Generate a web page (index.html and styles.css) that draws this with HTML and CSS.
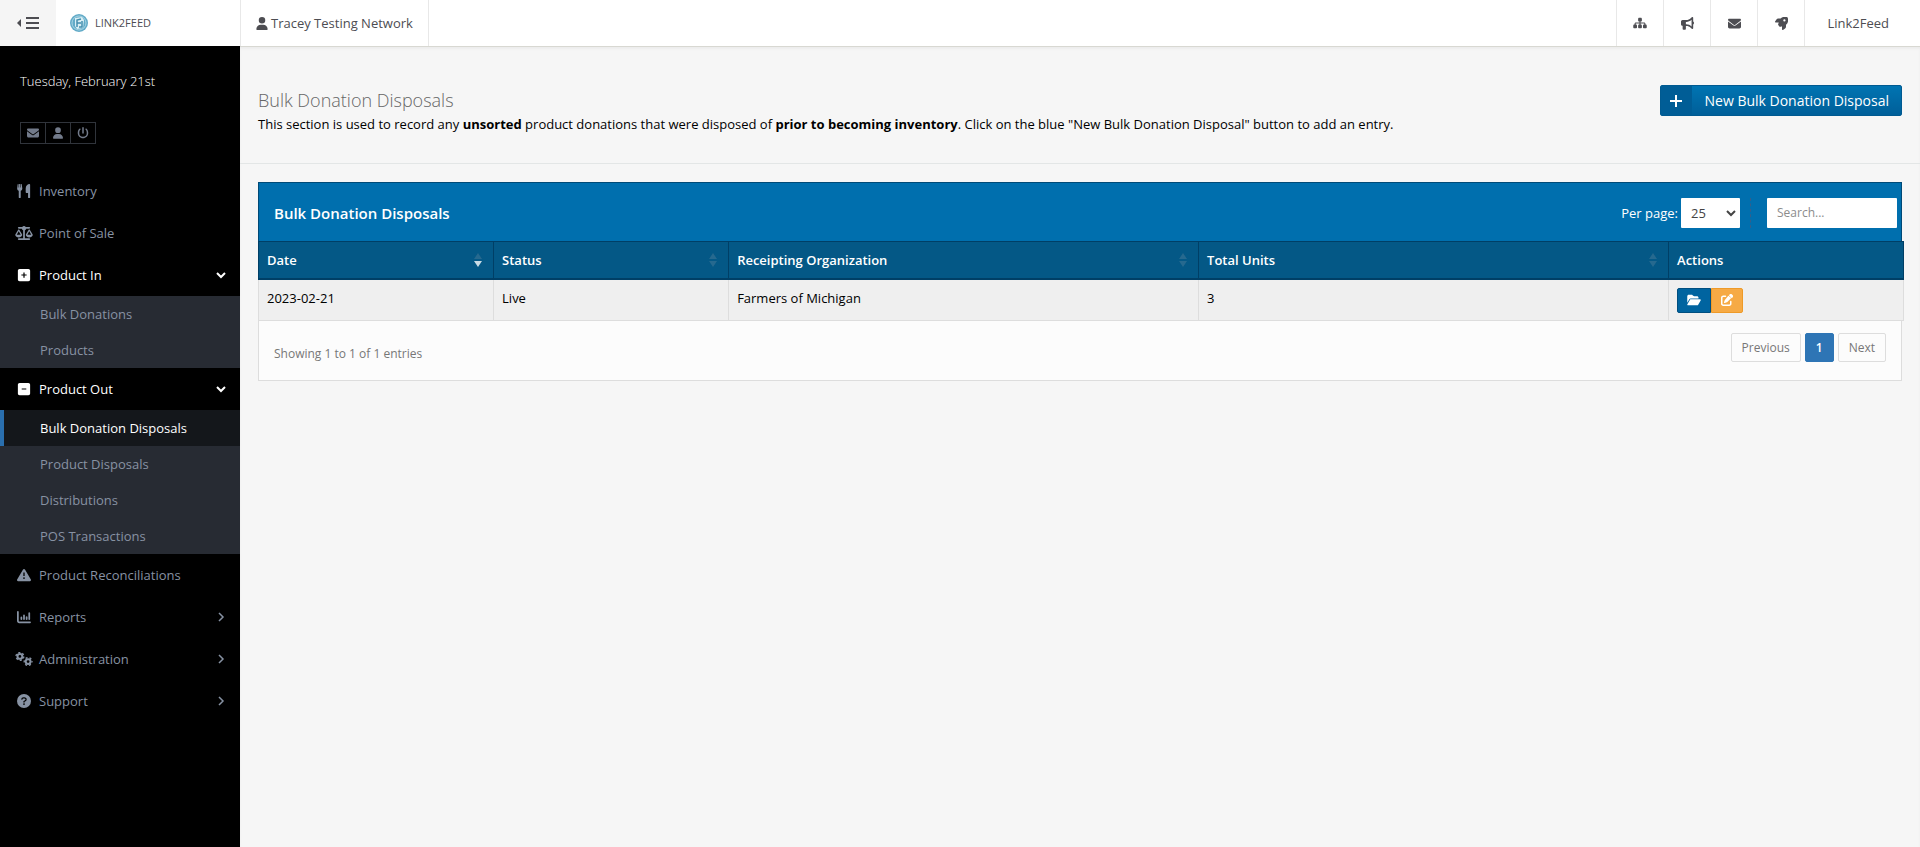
FILE: index.html
```html
<!DOCTYPE html>
<html lang="en">
<head>
<meta charset="utf-8">
<meta name="viewport" content="width=device-width, initial-scale=1">
<title>Bulk Donation Disposals</title>
<link rel="stylesheet" href="styles.css">
</head>
<body>
<svg class="sprite" aria-hidden="true">
  <symbol id="user" viewBox="0 0 448 512"><path d="M224 256A128 128 0 1 0 224 0a128 128 0 1 0 0 256zm-46 48C80 304 0 384 0 482c0 17 13 30 30 30h388c17 0 30-13 30-30 0-98-80-178-178-178z"/></symbol>
  <symbol id="envelope" viewBox="0 0 512 512"><path d="M48 64C21.500 64 0 85.500 0 112c0 15 7 29 19 38l218 164c11 9 27 9 38 0l218-164c12-9 19-23 19-38 0-26.500-21.500-48-48-48zM0 176v208c0 35 29 64 64 64h384c35 0 64-29 64-64V176L294 339c-23 17-53 17-76 0z"/></symbol>
  <symbol id="power" viewBox="0 0 512 512"><path d="M288 32c0-18-14-32-32-32s-32 14-32 32v224c0 18 14 32 32 32s32-14 32-32zM143 120c14-11 16-31 5-45s-31-16-45-5C55 109 32 180 32 256c0 124 100 224 224 224s224-100 224-224c0-76-29-147-71-186-14-11-34-9-45 5s-9 34 5 45c29 24 47 78 47 136a160 160 0 0 1-320 0c0-58 18-112 47-136z"/></symbol>
  <symbol id="utensils" viewBox="0 0 512 512"><path d="M40 0c12 0 18 8 18 18v112h18V18c0-24 36-24 36 0v112h18V18c0-24 44-24 44 0l20 142c0 44-26 72-58 88v232c0 42-72 42-72 0V248C32 232 6 204 6 160L22 18C22 8 30 0 40 0zM456 0c14 0 24 10 24 24v456c0 42-76 42-76 0V328h-48c-22 0-38-18-38-40V160C318 62 390 0 456 0z"/></symbol>
  <symbol id="scale" viewBox="0 0 640 512"><path d="M384 32h128c18 0 32 14 32 32s-14 32-32 32H399c-6 25-24 46-47 57v295h160c18 0 32 14 32 32s-14 32-32 32H128c-18 0-32-14-32-32s14-32 32-32h160V153c-23-11-41-32-47-57H128c-18 0-32-14-32-32s14-32 32-32h128c15-19 38-32 64-32s49 13 64 32zm56 288h144l-72-124zm72 96c-63 0-115-34-126-79-3-11 1-22 7-32l94-162c6-9 15-15 25-15s20 6 25 15l95 162c6 10 9 21 7 32-11 45-64 79-127 79zM127 196 55 320h144zM1 337c-3-11 1-22 7-32l94-162c5-9 14-15 25-15s20 6 25 15l95 162c5 10 9 21 6 32-11 45-63 79-126 79S12 382 1 337z"/></symbol>
  <symbol id="plus-box" viewBox="0 0 448 512"><path fill-rule="evenodd" d="M64 32h320c35 0 64 29 64 64v320c0 35-29 64-64 64H64c-35 0-64-29-64-64V96c0-35 29-64 64-64zm138 128v74h-74v44h74v74h44v-74h74v-44h-74v-74z"/></symbol>
  <symbol id="minus-box" viewBox="0 0 448 512"><path fill-rule="evenodd" d="M64 32h320c35 0 64 29 64 64v320c0 35-29 64-64 64H64c-35 0-64-29-64-64V96c0-35 29-64 64-64zm76 202v44h168v-44z"/></symbol>
  <symbol id="warning" viewBox="0 0 512 512"><path fill-rule="evenodd" d="M256 32c14 0 27 7 35 20l216 368c17 28-5 60-35 60H40c-31 0-52-33-35-60L221 52c8-13 21-20 35-20zm-24 128v136h48V160zm24 176a32 32 0 1 0 0 64 32 32 0 1 0 0-64z"/></symbol>
  <symbol id="chart" viewBox="0 0 512 512"><path d="M32 32c18 0 32 14 32 32v336c0 9 7 16 16 16h400c18 0 32 14 32 32s-14 32-32 32H80c-44 0-80-36-80-80V64c0-18 14-32 32-32zm128 208c18 0 32 14 32 32v64c0 40-64 40-64 0v-64c0-18 14-32 32-32zm64-48c0-42 64-42 64 0v144c0 40-64 40-64 0zm128 32c18 0 32 14 32 32v80c0 40-64 40-64 0v-80c0-18 14-32 32-32zm64-112c0-42 64-42 64 0v224c0 40-64 40-64 0z"/></symbol>
  <symbol id="gears" viewBox="0 0 640 512"><g fill="none" stroke="currentColor"><circle cx="170" cy="160" r="88" stroke-width="74"/><circle cx="170" cy="160" r="142" stroke-width="50" stroke-dasharray="74 75"/><circle cx="470" cy="350" r="88" stroke-width="74"/><circle cx="470" cy="350" r="142" stroke-width="50" stroke-dasharray="74 75" stroke-dashoffset="40"/></g></symbol>
  <symbol id="question" viewBox="0 0 512 512"><circle cx="256" cy="256" r="256"/><path d="M178 190c4-34 26-48 58-48h32c70 0 88 76 34 104l-46 28v20" fill="none" stroke="#000" stroke-width="46" stroke-linecap="round"/><circle cx="256" cy="366" r="32" fill="#000"/></symbol>
  <symbol id="down" viewBox="0 0 10 10"><path d="M1 3l4 4 4-4" fill="none" stroke="currentColor" stroke-width="2"/></symbol>
  <symbol id="right" viewBox="0 0 10 10"><path d="M3 1l4 4-4 4" fill="none" stroke="currentColor" stroke-width="1.500"/></symbol>
  <symbol id="sitemap" viewBox="0 0 576 512"><path d="M208 80c0-26 22-48 48-48h64c26 0 48 22 48 48v64c0 26-22 48-48 48h-8v40h152c30 0 56 25 56 56v32h8c26 0 48 22 48 48v64c0 26-22 48-48 48h-64c-26 0-48-22-48-48v-64c0-26 22-48 48-48h8v-32c0-4-4-8-8-8H312v40h8c26 0 48 22 48 48v64c0 26-22 48-48 48h-64c-26 0-48-22-48-48v-64c0-26 22-48 48-48h8v-40H112c-4 0-8 4-8 8v32h8c26 0 48 22 48 48v64c0 26-22 48-48 48H48c-26 0-48-22-48-48v-64c0-26 22-48 48-48h8v-32c0-31 25-56 56-56h152v-40h-8c-26 0-48-22-48-48z"/></symbol>
  <symbol id="bullhorn" viewBox="0 0 512 512"><path fill-rule="evenodd" d="M480 32c0-29-35-43-55-23l-43 44c-45 45-106 70-170 70H64c-35 0-64 29-64 64v96c0 35 29 64 64 64v128c0 18 14 32 32 32h64c18 0 32-14 32-32V352h20c64 0 125 25 170 70l43 43c20 21 55 7 55-23V300c19-9 32-34 32-60s-13-54-32-60zm-64 77v262c-57-53-131-83-208-83h-16V192h16c77 0 151-30 208-83z"/></symbol>
  <symbol id="rocket" viewBox="0 0 512 512"><path fill-rule="evenodd" d="M157 348 130 321c-7-7-9-17-7-26 7-24 15-52 25-79H24c-20 0-31-19-21-38l54-82c15-23 41-37 69-37h96C302-28 410-7 483 10c9 2 17 10 19 19 17 73 38 181-69 281v76c0 28-14 54-37 69l-82 53c-18 11-38-1-38-21V360c-27 11-56 20-80 26-9 2-19 0-26-7zM370 92a45 45 0 1 0 0 90 45 45 0 1 0 0-90z"/></symbol>
  <symbol id="folder" viewBox="0 0 576 512"><path d="M89 224 0 376V96c0-35 29-64 64-64h118c17 0 33 7 45 19l26 26c12 12 28 19 45 19h118c35 0 64 29 64 64v32H144c-23 0-44 12-55 32zm28 16c6-10 16-16 27-16h400c12 0 22 6 28 16s5 22 0 32L460 464c-6 10-17 16-28 16H32c-11 0-22-6-27-16s-6-22 0-32z"/></symbol>
  <symbol id="edit" viewBox="0 0 512 512"><path d="M472 22a74 74 0 0 0-106 0l-30 30 124 124 30-30a74 74 0 0 0 0-106zM172 242c-6 6-11 14-14 22l-30 89c-7 20 12 38 31 31l89-30c8-3 16-7 22-14l168-168L314 76zM96 64c-53 0-96 43-96 96v256c0 53 43 96 96 96h256c53 0 96-43 96-96v-96c0-42-64-42-64 0v96c0 18-14 32-32 32H96c-18 0-32-14-32-32V160c0-18 14-32 32-32h96c42 0 42-64 0-64z"/></symbol>
  <symbol id="plus" viewBox="0 0 12 12"><path d="M6 0v12M0 6h12" stroke="currentColor" stroke-width="2"/></symbol>
  <symbol id="sort" viewBox="0 0 8 16"><path d="M0 7l4-6 4 6z"/><path class="sort-down" d="M0 9l4 6 4-6z"/></symbol>
</svg>

<header class="topbar">
  <div class="topbar-brand">
    <button class="toggle" type="button" aria-label="Collapse menu">
      <svg width="22" height="12" viewBox="0 0 22 12"><path d="M4 2v8L0 6z"/><path d="M9 1h13M9 6h13M9 11h13" stroke="currentColor" stroke-width="2"/></svg>
    </button>
    <a class="brand" href="#">
      <svg width="18" height="18" viewBox="0 0 18 18"><circle cx="9" cy="9" r="9" fill="#62abc8"/><circle cx="9" cy="9" r="7" fill="none" stroke="#a9d5e4"/><path d="M5 4l7-1 2 3-1 8-6 1-2-3z" fill="#d9eff5"/><path d="M7 13V6l4-1M7 9h4M12 7v6H9" fill="none" stroke="#438fae" stroke-width="1.500"/></svg>
      LINK2FEED
    </a>
  </div>
  <a class="network" href="#"><svg width="12" height="13"><use href="#user"/></svg>Tracey Testing Network</a>
  <nav class="topbar-links" aria-label="Quick links">
    <a class="quick" href="#" aria-label="Network"><svg width="14" height="12"><use href="#sitemap"/></svg></a>
    <a class="quick" href="#" aria-label="Announcements"><svg width="13" height="13"><use href="#bullhorn"/></svg></a>
    <a class="quick" href="#" aria-label="Messages"><svg width="13" height="13"><use href="#envelope"/></svg></a>
    <a class="quick" href="#" aria-label="Launch"><svg width="13" height="13"><use href="#rocket"/></svg></a>
    <a class="account" href="#">Link2Feed</a>
  </nav>
</header>

<div class="layout">
  <aside class="sidebar">
    <p class="date">Tuesday, February 21st</p>
    <div class="user-tools">
      <button type="button" aria-label="Messages"><svg width="12" height="12"><use href="#envelope"/></svg></button>
      <button type="button" aria-label="Profile"><svg width="10" height="12"><use href="#user"/></svg></button>
      <button type="button" aria-label="Log out"><svg width="12" height="12"><use href="#power"/></svg></button>
    </div>
    <nav aria-label="Main menu">
      <ul class="menu">
        <li><a class="item" href="#"><svg class="icon"><use href="#utensils"/></svg>Inventory</a></li>
        <li><a class="item" href="#"><svg class="icon"><use href="#scale"/></svg>Point of Sale</a></li>
        <li><a class="item open" href="#"><svg class="icon"><use href="#plus-box"/></svg>Product In<svg class="arrow"><use href="#down"/></svg></a>
          <ul class="submenu">
            <li><a href="#">Bulk Donations</a></li>
            <li><a href="#">Products</a></li>
          </ul>
        </li>
        <li><a class="item open" href="#"><svg class="icon"><use href="#minus-box"/></svg>Product Out<svg class="arrow"><use href="#down"/></svg></a>
          <ul class="submenu">
            <li><a class="current" href="#">Bulk Donation Disposals</a></li>
            <li><a href="#">Product Disposals</a></li>
            <li><a href="#">Distributions</a></li>
            <li><a href="#">POS Transactions</a></li>
          </ul>
        </li>
        <li><a class="item" href="#"><svg class="icon"><use href="#warning"/></svg>Product Reconciliations</a></li>
        <li><a class="item" href="#"><svg class="icon"><use href="#chart"/></svg>Reports<svg class="arrow"><use href="#right"/></svg></a></li>
        <li><a class="item" href="#"><svg class="icon"><use href="#gears"/></svg>Administration<svg class="arrow"><use href="#right"/></svg></a></li>
        <li><a class="item" href="#"><svg class="icon"><use href="#question"/></svg>Support<svg class="arrow"><use href="#right"/></svg></a></li>
      </ul>
    </nav>
  </aside>

  <main class="main">
    <section class="page-head">
      <div>
        <h1>Bulk Donation Disposals</h1>
        <p>This section is used to record any <b>unsorted</b> product donations that were disposed of <b>prior to becoming inventory</b>. Click on the blue "New Bulk Donation Disposal" button to add an entry.</p>
      </div>
      <a class="new-button" href="#"><span class="new-icon"><svg width="12" height="12"><use href="#plus"/></svg></span><span class="new-label">New Bulk Donation Disposal</span></a>
    </section>

    <section class="panel">
      <div class="panel-head">
        <h2>Bulk Donation Disposals</h2>
        <label for="per-page">Per page:</label>
        <div class="select">
          <select id="per-page"><option>25</option><option>50</option><option>100</option></select>
          <svg width="10" height="10"><use href="#down"/></svg>
        </div>
        <span class="divider"></span>
        <input class="search" type="search" placeholder="Search..." aria-label="Search">
      </div>
      <table class="grid">
        <colgroup><col class="narrow"><col class="narrow"><col class="wide"><col class="wide"><col></colgroup>
        <thead>
          <tr>
            <th><div class="th sorted">Date<svg width="8" height="16"><use href="#sort"/></svg></div></th>
            <th><div class="th">Status<svg width="8" height="16"><use href="#sort"/></svg></div></th>
            <th><div class="th">Receipting Organization<svg width="8" height="16"><use href="#sort"/></svg></div></th>
            <th><div class="th">Total Units<svg width="8" height="16"><use href="#sort"/></svg></div></th>
            <th><div class="th">Actions</div></th>
          </tr>
        </thead>
        <tbody>
          <tr>
            <td>2023-02-21</td><td>Live</td><td>Farmers of Michigan</td><td>3</td>
            <td><div class="actions"><button class="view" type="button" aria-label="Open"><svg width="14" height="12"><use href="#folder"/></svg></button><button class="edit" type="button" aria-label="Edit"><svg width="12" height="12"><use href="#edit"/></svg></button></div></td>
          </tr>
        </tbody>
      </table>
      <div class="panel-foot">
        <p>Showing 1 to 1 of 1 entries</p>
        <nav class="pages" aria-label="Pages"><a href="#">Previous</a><a class="active" href="#">1</a><a href="#">Next</a></nav>
      </div>
    </section>
  </main>
</div>
</body>
</html>
```
FILE: styles.css
```css
* { box-sizing: border-box; }

body {
  margin: 0;
  min-height: 100vh;
  display: flex;
  flex-direction: column;
  background: #f6f6f6;
  color: #000;
  font: 13px/20px "Open Sans", sans-serif;
}

h1, h2, p, ul { margin: 0; padding: 0; }
ul { list-style: none; }
a { color: inherit; text-decoration: none; }
button, input, select { font: inherit; }
button { padding: 0; cursor: pointer; }
svg { display: block; flex: none; fill: currentColor; }
.sprite { position: absolute; width: 0; height: 0; }

/* Top bar */
.topbar {
  position: relative;
  z-index: 1;
  display: flex;
  height: 46px;
  background: #fff;
  color: #4d4d52;
}
.topbar-brand { display: flex; width: 240px; }
.toggle {
  display: grid;
  place-items: center;
  width: 56px;
  border: 0;
  background: #f5f5f5;
  color: #4d4d52;
}
.brand {
  display: flex;
  align-items: center;
  gap: 7px;
  padding-left: 14px;
  font-size: 11px;
}
.network {
  display: flex;
  align-items: center;
  gap: 3px;
  padding: 0 15px;
  border: solid #e8e8e8;
  border-width: 0 1px;
}
.topbar-links { display: flex; margin-left: auto; }
.quick, .account {
  display: flex;
  align-items: center;
  justify-content: center;
  border-left: 1px solid #e8e8e8;
}
.quick { width: 47px; }
.account { padding: 0 31px 0 22px; }

.layout { display: flex; flex: 1; }

/* Sidebar */
.sidebar {
  flex: none;
  width: 240px;
  background: #000;
  color: #8792a3;
}
.date { padding: 25px 20px 0; color: #fff; font-weight: 300; }
.user-tools { display: flex; padding: 31px 20px 26px; }
.user-tools button {
  display: grid;
  place-items: center;
  width: 26px;
  height: 22px;
  border: 1px solid #30343b;
  background: none;
  color: #737b8b;
}
.user-tools button + button { margin-left: -1px; }
.item {
  display: flex;
  align-items: center;
  gap: 6px;
  height: 42px;
  padding: 0 14px 0 15px;
}
.icon { width: 18px; height: 14px; }
.arrow { width: 10px; height: 10px; margin-left: auto; }
.open { color: #fff; }
.submenu { background: #272b33; }
.submenu a {
  display: block;
  height: 36px;
  padding: 8px 36px;
  border-left: 4px solid transparent;
}
.submenu .current {
  border-color: #2a6fae;
  background: #14171b;
  color: #fff;
}

/* Page heading */
.main {
  flex: 1;
  min-width: 0;
  border-top: 1px solid #d8d8d2;
  box-shadow: inset 0 2px 2px #ececec;
}
.page-head {
  display: flex;
  align-items: flex-start;
  justify-content: space-between;
  gap: 20px;
  padding: 38px 18px 29px;
  border-bottom: 1px solid #e3e6e6;
}
.page-head h1 {
  padding: 3px 0 2px;
  color: #666;
  font-size: 18px;
  font-weight: 300;
  line-height: 24px;
}
.new-button {
  display: flex;
  flex: none;
  height: 31px;
  border: 1px solid #005a91;
  border-radius: 2px;
  background: linear-gradient(#0074b2, #005f99);
  color: #fff;
  font-size: 14px;
  line-height: 29px;
}
.new-icon {
  display: grid;
  place-items: center;
  width: 31px;
  background: #005d96;
}
.new-label { padding: 0 12px 0 13px; }

/* Data panel */
.panel {
  margin: 18px;
  border: 1px solid #ddd;
  border-top: 0;
  background: #fcfcfc;
}
.panel-head {
  display: flex;
  align-items: center;
  height: 59px;
  margin: 0 -1px;
  padding: 1px 4px 0 15px;
  border: 1px solid #004a77;
  border-bottom: 0;
  background: #006fae;
  color: #fff;
}
.panel-head h2 { margin-right: auto; font-size: 15px; font-weight: 600; }
.select { position: relative; margin-left: 3px; }
.select select {
  display: block;
  width: 59px;
  height: 30px;
  padding: 0 10px;
  border: 0;
  border-radius: 1px;
  background: #fff;
  color: #444;
  appearance: none;
}
.select svg {
  position: absolute;
  top: 10px;
  right: 4px;
  color: #444;
  pointer-events: none;
}
.divider { height: 30px; margin: 0 16px 0 10px; border-left: 1px dashed #355f8a; }
.search {
  width: 130px;
  height: 30px;
  padding: 0 10px;
  border: 0;
  border-radius: 1px;
  background: #fff;
  font-size: 12px;
  appearance: none;
}
.search::placeholder { color: #8c8c8c; }

.grid {
  width: calc(100% + 4px);
  margin-left: -1px;
  border-collapse: collapse;
  table-layout: fixed;
}
.narrow { width: 14.290%; }
.wide { width: 28.570%; }
.grid th, .grid td { padding: 0 8px; text-align: left; }
.grid th {
  height: 37px;
  border: 1px solid #003f66;
  border-width: 1px 1px 2px;
  background: #045886;
  color: #fff;
  font-weight: 600;
}
.th { display: flex; align-items: center; justify-content: space-between; }
.th svg { margin-right: 3px; color: #26698f; }
.sort-down { fill: var(--sort-down, currentColor); }
.sorted { --sort-down: #c9dbe5; }
.grid td {
  height: 42px;
  border: 1px solid #ddd;
  background: #efefef;
  vertical-align: top;
  padding-top: 8px;
}
.actions { display: flex; }
.actions button {
  display: grid;
  place-items: center;
  height: 25px;
  color: #fff;
}
.actions .view {
  width: 34px;
  border: 1px solid #004f80;
  border-radius: 2px 0 0 2px;
  background: #0064a0;
}
.actions .edit {
  width: 32px;
  border: 1px solid #ee9a28;
  border-radius: 0 2px 2px 0;
  background: #f6aa45;
}

.panel-foot {
  display: flex;
  justify-content: space-between;
  padding: 12px 15px 16px;
  color: #777;
  font-size: 12px;
}
.panel-foot p { padding-top: 11px; }
.pages { display: flex; gap: 4px; }
.pages a {
  height: 29px;
  padding: 0 10px;
  border: 1px solid #ddd;
  border-radius: 2px;
  line-height: 27px;
}
.pages .active {
  border-color: #2e75b5;
  background: #2e75b5;
  color: #fff;
  font-weight: 600;
}
```
